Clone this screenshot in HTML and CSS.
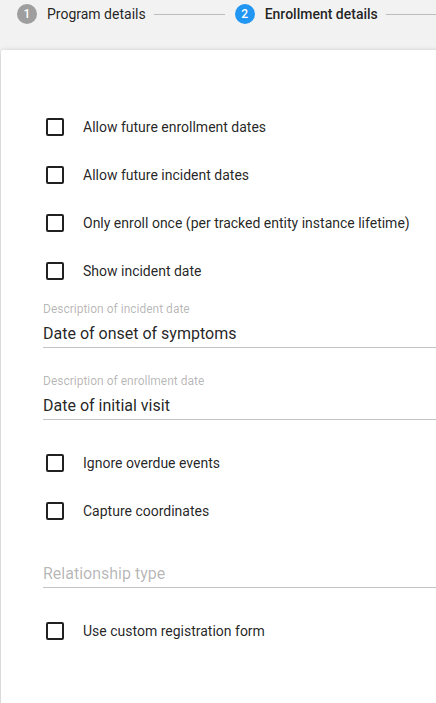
FILE: index.html
```html
<!DOCTYPE html>
<html>
<head>
<meta charset="utf-8">
<link rel="stylesheet" href="styles.css">
</head>
<body>
<div class="stepper">
  <div class="step">
    <span class="step-icon step-icon-done">1</span>
    <span class="step-label">Program details</span>
  </div>
  <span class="connector connector-fixed"></span>
  <div class="step">
    <span class="step-icon step-icon-active">2</span>
    <span class="step-label step-label-active">Enrollment details</span>
  </div>
  <span class="connector connector-grow"></span>
</div>
<div class="card">
  <div class="row"><span class="box"></span><span class="row-label">Allow future enrollment dates</span></div>
  <div class="row"><span class="box"></span><span class="row-label">Allow future incident dates</span></div>
  <div class="row"><span class="box"></span><span class="row-label">Only enroll once (per tracked entity instance lifetime)</span></div>
  <div class="row"><span class="box"></span><span class="row-label">Show incident date</span></div>
  <div class="field">
    <div class="field-label">Description of incident date</div>
    <div class="field-value">Date of onset of symptoms</div>
  </div>
  <div class="field">
    <div class="field-label">Description of enrollment date</div>
    <div class="field-value">Date of initial visit</div>
  </div>
  <div class="row"><span class="box"></span><span class="row-label">Ignore overdue events</span></div>
  <div class="row"><span class="box"></span><span class="row-label">Capture coordinates</span></div>
  <div class="field">
    <div class="field-label field-label-empty"></div>
    <div class="field-value field-placeholder">Relationship type</div>
  </div>
  <div class="row"><span class="box"></span><span class="row-label">Use custom registration form</span></div>
</div>
</body>
</html>
```
FILE: styles.css
```css
html, body {
  margin: 0;
  padding: 0;
  background: #f2f2f2;
  overflow: hidden;
  font-family: Roboto, "Liberation Sans", sans-serif;
}
.stepper {
  display: flex;
  align-items: center;
  height: 28px;
  padding-left: 17px;
}
.step {
  display: flex;
  align-items: center;
}
.step-icon {
  width: 20px;
  height: 20px;
  border-radius: 50%;
  color: #fff;
  font-size: 12px;
  font-weight: 500;
  display: flex;
  align-items: center;
  justify-content: center;
  margin-right: 10px;
}
.step-icon-done { background: #9e9e9e; }
.step-icon-active { background: #2196f3; }
.step-label {
  font-size: 14px;
  color: rgba(0,0,0,0.87);
}
.step-label-active { font-weight: 500; }
.connector {
  height: 1px;
  background: #bdbdbd;
}
.connector-fixed {
  width: 71px;
  margin: 0 10px 0 8px;
}
.connector-grow {
  flex: 1;
  margin-left: 8px;
}
.card {
  margin: 22px -20px 0 1px;
  background: #fff;
  border-radius: 2px;
  box-shadow: 0 1px 6px rgba(0,0,0,0.12), 0 1px 4px rgba(0,0,0,0.12);
  padding: 53px 0 60px 42px;
}
.row {
  height: 48px;
  display: flex;
  align-items: center;
}
.box {
  width: 14px;
  height: 14px;
  border: 2px solid #212121;
  border-radius: 2px;
  margin-left: 3px;
  margin-right: 19px;
  flex: none;
}
.row-label {
  font-size: 14px;
  color: rgba(0,0,0,0.87);
  white-space: nowrap;
}
.field {
  height: 72px;
  box-sizing: border-box;
  padding-top: 7px;
}
.field-label {
  font-size: 12px;
  line-height: 14px;
  height: 14px;
  color: rgba(0,0,0,0.3);
}
.field-value {
  margin-top: 6px;
  font-size: 16px;
  line-height: 24px;
  height: 24px;
  padding-bottom: 1px;
  color: rgba(0,0,0,0.87);
  border-bottom: 1px solid #c4c4c4;
}
.field-placeholder {
  color: rgba(0,0,0,0.3);
}
```
